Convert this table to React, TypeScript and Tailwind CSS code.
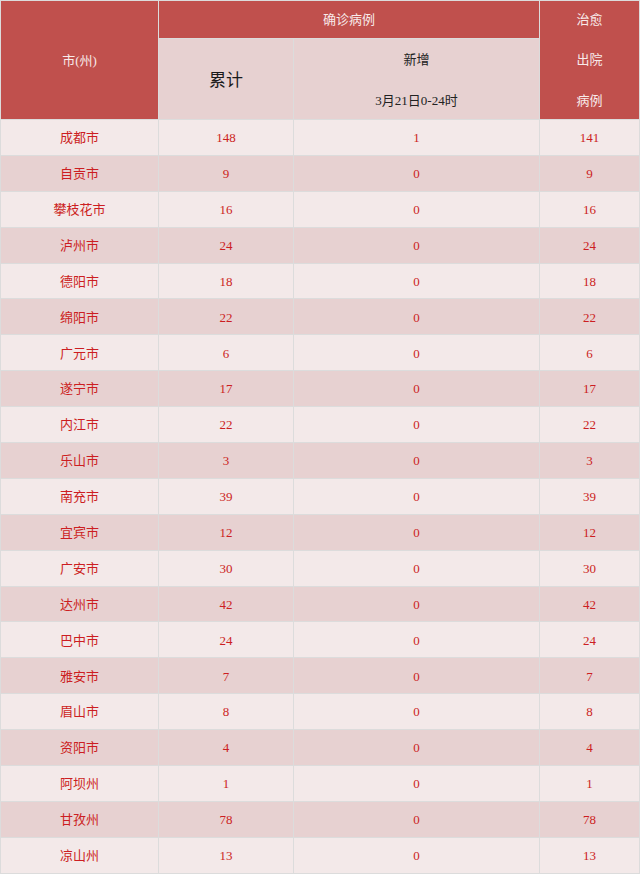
const rows: [string, string, string, string][] = [
  ["成都市", "148", "1", "141"],
  ["自贡市", "9", "0", "9"],
  ["攀枝花市", "16", "0", "16"],
  ["泸州市", "24", "0", "24"],
  ["德阳市", "18", "0", "18"],
  ["绵阳市", "22", "0", "22"],
  ["广元市", "6", "0", "6"],
  ["遂宁市", "17", "0", "17"],
  ["内江市", "22", "0", "22"],
  ["乐山市", "3", "0", "3"],
  ["南充市", "39", "0", "39"],
  ["宜宾市", "12", "0", "12"],
  ["广安市", "30", "0", "30"],
  ["达州市", "42", "0", "42"],
  ["巴中市", "24", "0", "24"],
  ["雅安市", "7", "0", "7"],
  ["眉山市", "8", "0", "8"],
  ["资阳市", "4", "0", "4"],
  ["阿坝州", "1", "0", "1"],
  ["甘孜州", "78", "0", "78"],
  ["凉山州", "13", "0", "13"],
];

const cell = "flex items-center justify-center border-r border-b border-[#dcdcdc]";

export default function App() {
  return (
    <div
      className="w-[640px] bg-white"
      style={{ fontFamily: '"Liberation Serif", "Noto Sans CJK SC", serif' }}
    >
      <div className="border-l border-t border-[#dcdcdc]">
        <div className="grid grid-cols-[158px_135px_246px_100px] grid-rows-[38px_81px]">
          <div className={`${cell} row-span-2 bg-[#c0504d] pt-[2px] text-[13px] text-[#f8eaea]`}>市(州)</div>
          <div className={`${cell} col-span-2 bg-[#c0504d] text-[13px] text-[#f8eaea]`}>确诊病例</div>
          <div className={`${cell} row-span-2 flex-col bg-[#c0504d] pt-[1px] text-[13px] leading-[40.5px] text-[#f8eaea]`}>
            <span>治愈</span>
            <span>出院</span>
            <span>病例</span>
          </div>
          <div className={`${cell} bg-[#e7d1d1] pt-[3px] text-[17px] text-[#1a1a1a]`}>累计</div>
          <div className={`${cell} flex-col bg-[#e7d1d1] pt-[1px] text-[13px] leading-[41px] text-[#222]`}>
            <span>新增</span>
            <span>3月21日0-24时</span>
          </div>
        </div>
        {rows.map((r, i) => (
          <div
            key={r[0]}
            className={`grid h-[35.9px] grid-cols-[158px_135px_246px_100px] text-[13px] text-[#cc1e22] ${
              i % 2 === 0 ? "bg-[#f3e9e9]" : "bg-[#e7d1d1]"
            }`}
          >
            <div className={`${cell} pt-[1px]`}>{r[0]}</div>
            <div className={`${cell} pt-[1px]`}>{r[1]}</div>
            <div className={`${cell} pt-[1px]`}>{r[2]}</div>
            <div className={`${cell} pt-[1px]`}>{r[3]}</div>
          </div>
        ))}
      </div>
    </div>
  );
}
